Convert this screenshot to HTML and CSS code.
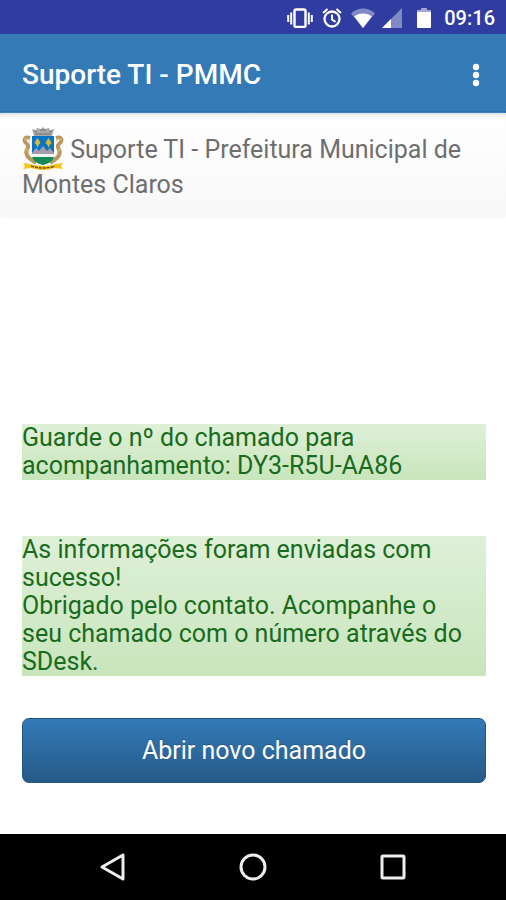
FILE: index.html
```html
<!DOCTYPE html>
<html lang="pt-BR">
<head>
<meta charset="utf-8">
<meta name="viewport" content="width=device-width, initial-scale=1">
<title>Suporte TI - PMMC</title>
<link rel="stylesheet" href="styles.css">
</head>
<body>
<div class="status-bar">
  <svg class="icon-vibrate" viewBox="0 0 26 20" width="26" height="20" aria-hidden="true">
    <path d="M1.2 7v7M4.2 4.500v12M24.8 7v7M21.8 4.500v12" stroke="#fff" stroke-width="2" fill="none"/>
    <rect x="7.500" y="1.500" width="11" height="17.500" rx="1.500" fill="none" stroke="#fff" stroke-width="2.400"/>
  </svg>
  <svg class="icon-alarm" viewBox="0 0 20 20" width="20" height="20" aria-hidden="true">
    <circle cx="10" cy="11" r="7.500" fill="none" stroke="#fff" stroke-width="2.300"/>
    <path d="M1 5l4.500-4M19 5l-4.500-4M10 6.500v5l3.500 2.300" fill="none" stroke="#fff" stroke-width="2"/>
  </svg>
  <svg class="icon-wifi" viewBox="0 0 24 20" width="24" height="20" aria-hidden="true">
    <path d="M0 5.500C7-1.300 17-1.300 24 5.500L12 20z" fill="#fff" opacity=".4"/>
    <path d="M3.200 8.500C8 4.500 16 4.500 20.800 8.500L12 20z" fill="#fff"/>
  </svg>
  <svg class="icon-signal" viewBox="0 0 20 20" width="20" height="20" aria-hidden="true">
    <path d="M0 20L20 0v20z" fill="#fff" opacity=".4"/>
    <path d="M0 20L9 11v9z" fill="#fff"/>
  </svg>
  <svg class="icon-battery" viewBox="0 0 14 20" width="14" height="20" aria-hidden="true">
    <path d="M4 0h6v2h4v3H0V2h4z" fill="#fff" opacity=".55"/>
    <path d="M0 4h14v15q0 1-1 1H1q-1 0-1-1z" fill="#fff"/>
  </svg>
  <span class="clock">09:16</span>
</div>
<header class="app-bar">
  <h1 class="app-title">Suporte TI - PMMC</h1>
  <button class="menu-button" type="button" aria-label="Menu">
    <svg viewBox="0 0 8 24" width="8" height="24" aria-hidden="true">
      <circle cx="4" cy="4" r="3.200" fill="#fff"/><circle cx="4" cy="12" r="3.200" fill="#fff"/><circle cx="4" cy="20" r="3.200" fill="#fff"/>
    </svg>
  </button>
</header>
<div class="banner">
  <a class="brand" href="#">
    <svg class="crest" viewBox="0 0 42 44" width="42" height="44" aria-hidden="true">
      <path d="M10 2l4 1 1-2 4 1 2-2 2 2 4-1 1 2 4-1-2 7H12z" fill="#aaa9aa"/>
      <path d="M12 4l3 1M18 3h6M27 5l3-1M13 7h16" stroke="#777" fill="none"/>
      <path d="M8 11C2 9 1 14 5 17c4 3-3 6 0 11 1 4 6 5 9 8M34 11c6-2 7 3 3 6-4 3 3 6 0 11-1 4-6 5-9 8" fill="none" stroke="#b99762" stroke-width="4"/>
      <path d="M2 13q4-3 6 2M2 23q4-2 5 4M40 13q-4-3-6 2M40 23q-4-2-5 4" fill="none" stroke="#e5c987"/>
      <path d="M10 9h22v18q0 7-11 10-11-3-11-10z" fill="#0874c4"/>
      <path d="M10 26l4-5 3 3 4-5 4 5 3-3 4 5v3H10z" fill="#a99dad"/>
      <path d="M10 27h22v4H10z" fill="#eef5f2"/>
      <path d="M10 30h22q-2 6-11 8-9-2-11-8z" fill="#148b55"/>
      <path d="M15.500 11l2 3 1 2-2 2-1 3-1-3-2-2 1-2zM26.500 11l2 3 1 2-2 2-1 3-1-3-2-2 1-2z" fill="#d8ba3b"/>
      <path d="M1 36l7 1q13 4 26 0l7-1-2 3 2 3-8-1q-12 4-24 0l-8 1 2-3z" fill="#f3c51c"/>
      <path d="M9 39q12 4 24 0" fill="none" stroke="#66501e" stroke-width="1.500" stroke-dasharray="3 1"/>
    </svg>
    Suporte TI - Prefeitura Municipal de Montes Claros</a>
</div>
<main class="content">
  <p class="alert">Guarde o nº do chamado para acompanhamento: DY3-R5U-AA86</p>
  <p class="alert">As informações foram enviadas com sucesso!<br>Obrigado pelo contato. Acompanhe o seu chamado com o número através do SDesk.</p>
  <button class="primary" type="button">Abrir novo chamado</button>
</main>
<nav class="system-nav" aria-label="Sistema">
  <button type="button" aria-label="Voltar"><svg viewBox="0 0 28 28" width="28" height="28" aria-hidden="true"><path d="M24 2v24L3 14z"/></svg></button>
  <button type="button" aria-label="Início"><svg viewBox="0 0 28 28" width="28" height="28" aria-hidden="true"><circle cx="14" cy="14" r="12"/></svg></button>
  <button type="button" aria-label="Recentes"><svg viewBox="0 0 28 28" width="28" height="28" aria-hidden="true"><rect x="3" y="3" width="22" height="22" rx="1"/></svg></button>
</nav>
</body>
</html>
```
FILE: styles.css
```css
* { box-sizing: border-box; }

body {
  margin: 0;
  min-height: 100vh;
  display: flex;
  flex-direction: column;
  background: #fff;
  font-family: Roboto, "Liberation Sans", sans-serif;
  font-size: 25px;
}

button {
  font: inherit;
  border: 0;
  padding: 0;
  background: none;
  cursor: pointer;
}

svg { display: block; }

.status-bar {
  display: flex;
  align-items: center;
  justify-content: flex-end;
  height: 34px;
  padding: 2px 11px 0 0;
  background: #303c9f;
  color: #fff;
}

.icon-vibrate, .icon-alarm { margin-right: 9px; }
.icon-wifi { margin-right: 7px; }
.icon-signal { margin-right: 15px; }
.icon-battery { margin-right: 13px; }

.clock {
  font-size: 20px;
  font-weight: 500;
  line-height: 24px;
}

.app-bar {
  display: flex;
  align-items: center;
  justify-content: space-between;
  height: 79px;
  padding: 4px 22px 0;
  background: #337ab7;
  border-bottom: 2px solid #1b6bae;
  color: #fff;
}

.app-title {
  margin: 0;
  font-size: 28px;
  font-weight: 500;
  line-height: 36px;
}

.menu-button { padding: 4px; }

.banner {
  padding: 19px 22px 14px;
  background: linear-gradient(#fff, #f8f8f8);
  box-shadow: inset 0 5px 4px -3px #ddd, 0 1px 3px #f4f4f4;
}

.brand {
  display: block;
  color: #6e6e6e;
  line-height: 35px;
  text-decoration: none;
}

.crest {
  display: inline-block;
  vertical-align: middle;
  margin: -8px 0 -4px;
}

.content {
  flex: 1;
  display: flex;
  flex-direction: column;
  justify-content: flex-end;
  padding: 40px 20px 51px 22px;
}

.alert {
  margin: 0 0 56px;
  padding-right: 12px;
  background: linear-gradient(#dff0d8, #c8e5bc);
  color: #196b20;
  line-height: 28px;
}

.alert:nth-of-type(2) { margin-bottom: 42px; }

.primary {
  height: 65px;
  border: 1px solid #245580;
  border-radius: 7px;
  background: linear-gradient(#337ab7, #265a88);
  color: #fff;
  text-shadow: 0 -1px 0 rgba(0, 0, 0, .2);
}

.system-nav {
  display: flex;
  justify-content: center;
  align-items: center;
  gap: 112px;
  height: 66px;
  background: #000;
}

.system-nav svg {
  fill: none;
  stroke: #eee;
  stroke-width: 3;
  stroke-linejoin: round;
}
```
